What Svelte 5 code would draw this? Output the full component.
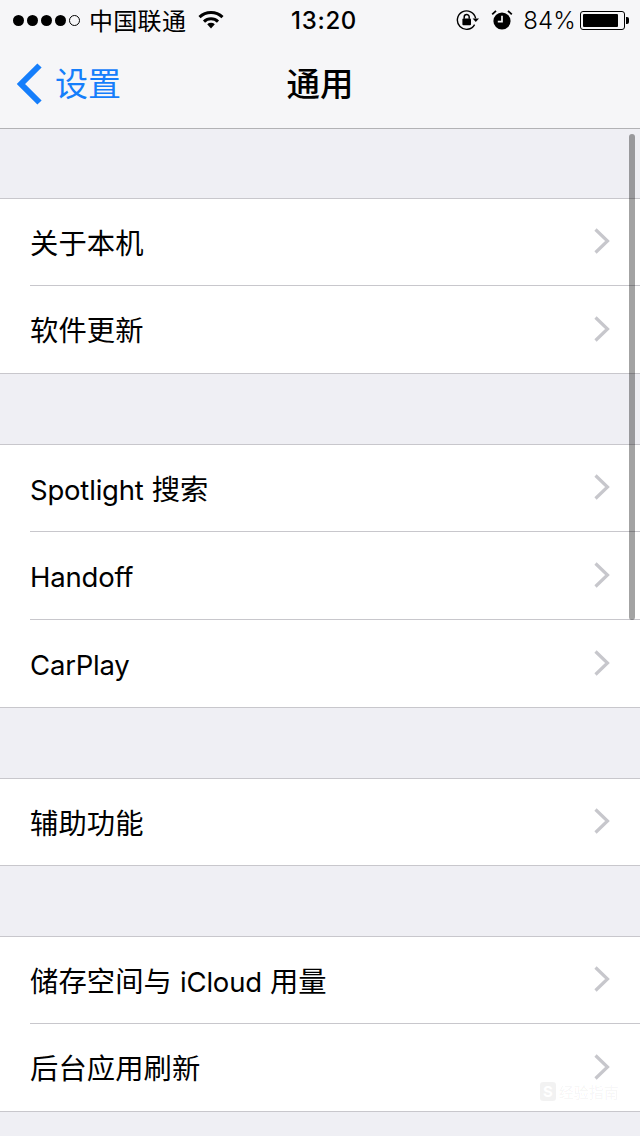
<script>
  const groups = [
    ["关于本机", "软件更新"],
    ["Spotlight 搜索", "Handoff", "CarPlay"],
    ["辅助功能"],
    ["储存空间与 iCloud 用量", "后台应用刷新"]
  ];

  // latin runs sit a little tighter than the CJK ones
  const runs = (label) => label.split(/([A-Za-z]+)/).filter(Boolean);
  const isLatin = (run) => /^[A-Za-z]+$/.test(run);
</script>

<div class="screen">
  <header class="nav">
    <div class="status">
      <div class="status-left">
        <span class="signal">
          {#each [1, 2, 3, 4] as n (n)}<i class="dot"></i>{/each}<i class="dot empty"></i>
        </span>
        <span class="carrier">中国联通</span>
        <svg class="wifi" width="26" height="18" viewBox="0 0 26 18">
          <path d="M1.5 6.2 A16.5 16.5 0 0 1 24.5 6.2" fill="none" stroke="#000" stroke-width="3" />
          <path d="M6 10.6 A10 10 0 0 1 20 10.6" fill="none" stroke="#000" stroke-width="3" />
          <path d="M9.2 13.2 A5.6 5.6 0 0 1 16.8 13.2 L13 17.4 Z" fill="#000" />
        </svg>
      </div>
      <span class="time">13:20</span>
      <div class="status-right">
        <svg width="24" height="22" viewBox="0 0 24 22">
          <path d="M18.6 15.6 A9.2 9.2 0 1 1 19.6 9.4" fill="none" stroke="#000" stroke-width="1.4" />
          <path d="M16.6 9.4 H23 L19.8 13 Z" fill="#000" />
          <rect x="6.4" y="9.6" width="8.6" height="6.6" rx="1" fill="#000" />
          <path d="M8.2 9.8 V8 A2.5 2.5 0 0 1 13.2 8 V9.8" fill="none" stroke="#000" stroke-width="1.5" />
        </svg>
        <svg class="alarm" width="22" height="22" viewBox="0 0 22 22">
          <circle cx="11" cy="12" r="8.6" fill="#000" />
          <path d="M11 6.8 V12.6 H6.8" fill="none" stroke="#f5f5f7" stroke-width="1.7" />
          <path d="M1.2 5.4 L5 1.8 M20.8 5.4 L17 1.8" stroke="#000" stroke-width="1.8" />
        </svg>
        <span class="percent">84%</span>
        <span class="battery"><i class="level"></i></span>
        <i class="cap"></i>
      </div>
    </div>
    <div class="titlebar">
      <div class="back">
        <svg width="28" height="44" viewBox="0 0 28 44">
          <path d="M24.5 2.5 L6 21 L24.5 39.5" fill="none" stroke="#157efb" stroke-width="6" />
        </svg>
        <span>设置</span>
      </div>
      <h1>通用</h1>
    </div>
  </header>

  {#each groups as rows, g (g)}
    <section class="group">
      {#each rows as label (label)}
        <div class="row">
          <div class="row-inner">
            <span class="label">
              {#each runs(label) as run, r (r)}<span class:latin={isLatin(run)}>{run}</span>{/each}
            </span>
            <svg class="chevron" width="18" height="28" viewBox="0 0 18 28">
              <path d="M2.5 2.5 L14.5 14 L2.5 25.5" fill="none" stroke="#c7c7cc" stroke-width="3.2" />
            </svg>
          </div>
        </div>
      {/each}
    </section>
  {/each}

  <div class="scrollbar"></div>
  <div class="mark"><b>S</b><span>经验指南</span></div>
</div>

<style>
  :global(body) {
    background: #efeff4;
  }
  .screen {
    position: relative;
    width: 640px;
    height: 1136px;
    overflow: hidden;
    background: #efeff4;
    font-family: "Inter", "Liberation Sans", "Noto Sans CJK SC", sans-serif;
    color: #000;
  }
  .nav {
    height: 128px;
    background: #f6f6f8;
    border-bottom: 1px solid #b2b2b5;
  }
  .status {
    position: relative;
    display: flex;
    align-items: center;
    justify-content: space-between;
    height: 40px;
    padding: 0 11px 0 13px;
  }
  .status-left,
  .status-right {
    display: flex;
    align-items: center;
  }
  .signal {
    display: flex;
    gap: 3px;
    margin-right: 9px;
  }
  .dot {
    width: 11px;
    height: 11px;
    border-radius: 50%;
    background: #000;
  }
  .dot.empty {
    background: none;
    border: 1px solid #000;
    box-sizing: border-box;
  }
  .carrier {
    font-size: 24px;
    letter-spacing: 0.3px;
    margin-top: -2px;
  }
  .wifi {
    margin-left: 12px;
    margin-top: -1px;
  }
  .time {
    position: absolute;
    left: 291px;
    font-size: 24px;
    font-weight: 500;
    letter-spacing: 0.7px;
  }
  .status-right svg {
    flex: none;
  }
  .alarm {
    margin-left: 11px;
  }
  .percent {
    margin-left: 10px;
    margin-right: 4px;
    font-size: 24px;
    font-weight: 300;
    letter-spacing: 0.2px;
  }
  .battery {
    box-sizing: border-box;
    width: 45px;
    height: 19px;
    padding: 2px;
    border: 1px solid #000;
    border-radius: 3px;
  }
  .level {
    display: block;
    width: 35px;
    height: 100%;
    background: #000;
    border-radius: 1px;
  }
  .cap {
    width: 3px;
    height: 7px;
    margin-left: 1px;
    background: #000;
    border-radius: 0 2px 2px 0;
  }
  .titlebar {
    position: relative;
    display: flex;
    align-items: center;
    justify-content: center;
    height: 88px;
  }
  .back {
    position: absolute;
    left: 15px;
    top: 23px;
    display: flex;
    align-items: center;
    gap: 12px;
    color: #157efb;
    font-size: 33px;
    line-height: 44px;
  }
  .back span {
    margin-top: -2px;
  }
  h1 {
    margin: -6px 0 0;
    font-size: 33.5px;
    font-weight: 500;
  }
  .group {
    margin-top: 70px;
    background: #fff;
    border-top: 1px solid #c8c7cc;
    border-bottom: 1px solid #c8c7cc;
  }
  .group:first-of-type {
    margin-top: 69px;
  }
  .row {
    height: 86px;
    padding-left: 30px;
  }
  .row + .row {
    height: 88px;
  }
  .row + .row .row-inner {
    border-top: 1px solid #c8c7cc;
  }
  .row-inner {
    box-sizing: border-box;
    display: flex;
    align-items: center;
    justify-content: space-between;
    height: 100%;
    padding-right: 29px;
  }
  .label {
    margin-top: 3px;
    font-size: 28.3px;
    line-height: 40px;
    letter-spacing: 0.1px;
  }
  .latin {
    font-size: 27.5px;
    letter-spacing: -0.2px;
  }
  .chevron {
    margin-top: -2px;
  }
  .scrollbar {
    position: absolute;
    top: 134px;
    right: 5px;
    width: 6px;
    height: 486px;
    border-radius: 3px;
    background: rgba(0, 0, 0, 0.36);
  }
  .mark {
    position: absolute;
    left: 540px;
    top: 1081px;
    display: flex;
    align-items: center;
    gap: 3px;
    color: rgba(0, 0, 0, 0.05);
    font-size: 15px;
  }
  .mark b {
    padding: 0 3px;
    border-radius: 3px;
    background: rgba(0, 0, 0, 0.05);
    color: #fff;
  }
</style>
